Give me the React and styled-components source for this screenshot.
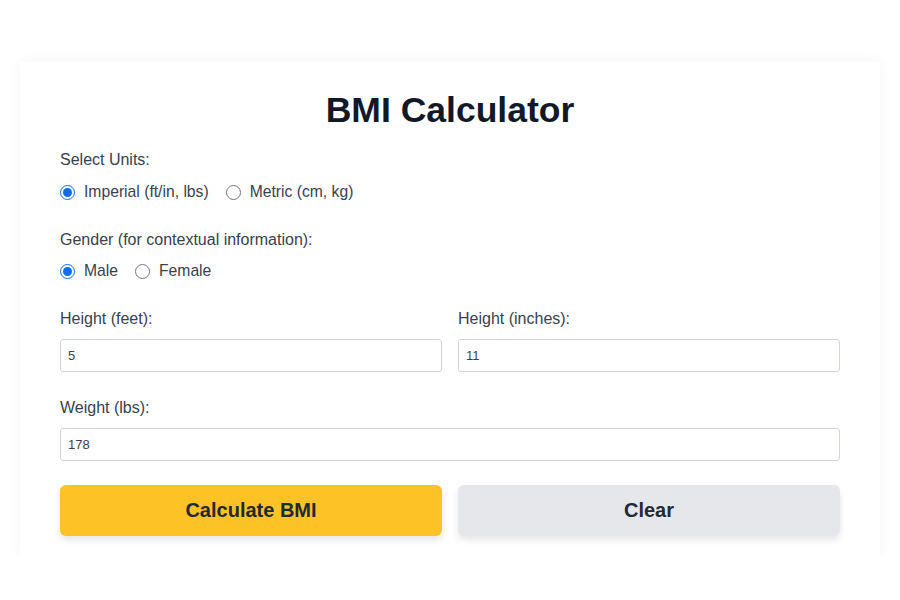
import React, { useState } from 'react';
import styled, { createGlobalStyle } from 'styled-components';

const GlobalStyle = createGlobalStyle`
  body {
    margin: 0;
    background: #ffffff;
    font-family: "Liberation Sans", Arial, Helvetica, sans-serif;
  }
`;

const Page = styled.div`
  padding: 62px 20px 0;
`;

const Card = styled.div`
  background: #ffffff;
  padding: 28px 40px 20px;
  box-shadow: 0 0 14px rgba(0, 0, 0, 0.045);
`;

const Title = styled.h1`
  margin: 0 0 21px;
  text-align: center;
  font-size: 35.5px;
  line-height: 40px;
  font-weight: 700;
  color: #111827;
`;

const Group = styled.div`
  margin-bottom: ${(p) => p.$gap || 0}px;
`;

const Label = styled.label`
  display: block;
  font-size: 16px;
  line-height: 18px;
  color: #374151;
  margin-bottom: ${(p) => p.$space || 11}px;
`;

const RadioRow = styled.div`
  display: flex;
  align-items: center;
  gap: 17px;
  height: 20px;
`;

const RadioOption = styled.label`
  display: flex;
  align-items: center;
  gap: 9px;
  font-size: 15.7px;
  color: #374151;
  cursor: pointer;
`;

const Radio = styled.input`
  margin: 0;
  width: 15px;
  height: 15px;
  accent-color: #0b6ef5;
`;

const Columns = styled.div`
  display: grid;
  grid-template-columns: 1fr 1fr;
  gap: 16px;
`;

const TextInput = styled.input`
  box-sizing: border-box;
  display: block;
  width: 100%;
  height: 33px;
  padding: 0 7px;
  border: 1px solid #d1d5db;
  border-radius: 3px;
  font-family: inherit;
  font-size: 13px;
  color: #374151;
  outline: none;
`;

const Actions = styled.div`
  display: grid;
  grid-template-columns: 1fr 1fr;
  gap: 16px;
`;

const Button = styled.button`
  height: 51px;
  border: none;
  border-radius: 6px;
  font-family: inherit;
  font-size: 20px;
  font-weight: 700;
  color: #1f2937;
  background: ${(p) => (p.$primary ? '#fcc226' : '#e5e7eb')};
  box-shadow: 0 4px 7px rgba(0, 0, 0, 0.1);
  cursor: pointer;
`;

export default function App() {
  const [units, setUnits] = useState('imperial');
  const [gender, setGender] = useState('male');
  const [feet, setFeet] = useState('5');
  const [inches, setInches] = useState('11');
  const [weight, setWeight] = useState('178');

  const clear = () => {
    setFeet('');
    setInches('');
    setWeight('');
  };

  return (
    <Page>
      <GlobalStyle />
      <Card>
        <Title>BMI Calculator</Title>

        <Group $gap={29}>
          <Label $space={13}>Select Units:</Label>
          <RadioRow>
            <RadioOption>
              <Radio type="radio" name="units" checked={units === 'imperial'} onChange={() => setUnits('imperial')} />
              Imperial (ft/in, lbs)
            </RadioOption>
            <RadioOption>
              <Radio type="radio" name="units" checked={units === 'metric'} onChange={() => setUnits('metric')} />
              Metric (cm, kg)
            </RadioOption>
          </RadioRow>
        </Group>

        <Group $gap={29}>
          <Label $space={12}>Gender (for contextual information):</Label>
          <RadioRow>
            <RadioOption>
              <Radio type="radio" name="gender" checked={gender === 'male'} onChange={() => setGender('male')} />
              Male
            </RadioOption>
            <RadioOption>
              <Radio type="radio" name="gender" checked={gender === 'female'} onChange={() => setGender('female')} />
              Female
            </RadioOption>
          </RadioRow>
        </Group>

        <Group $gap={27}>
          <Columns>
            <div>
              <Label>Height (feet):</Label>
              <TextInput value={feet} onChange={(e) => setFeet(e.target.value)} />
            </div>
            <div>
              <Label>Height (inches):</Label>
              <TextInput value={inches} onChange={(e) => setInches(e.target.value)} />
            </div>
          </Columns>
        </Group>

        <Group $gap={24}>
          <Label>Weight (lbs):</Label>
          <TextInput value={weight} onChange={(e) => setWeight(e.target.value)} />
        </Group>

        <Actions>
          <Button $primary>Calculate BMI</Button>
          <Button onClick={clear}>Clear</Button>
        </Actions>
      </Card>
    </Page>
  );
}
